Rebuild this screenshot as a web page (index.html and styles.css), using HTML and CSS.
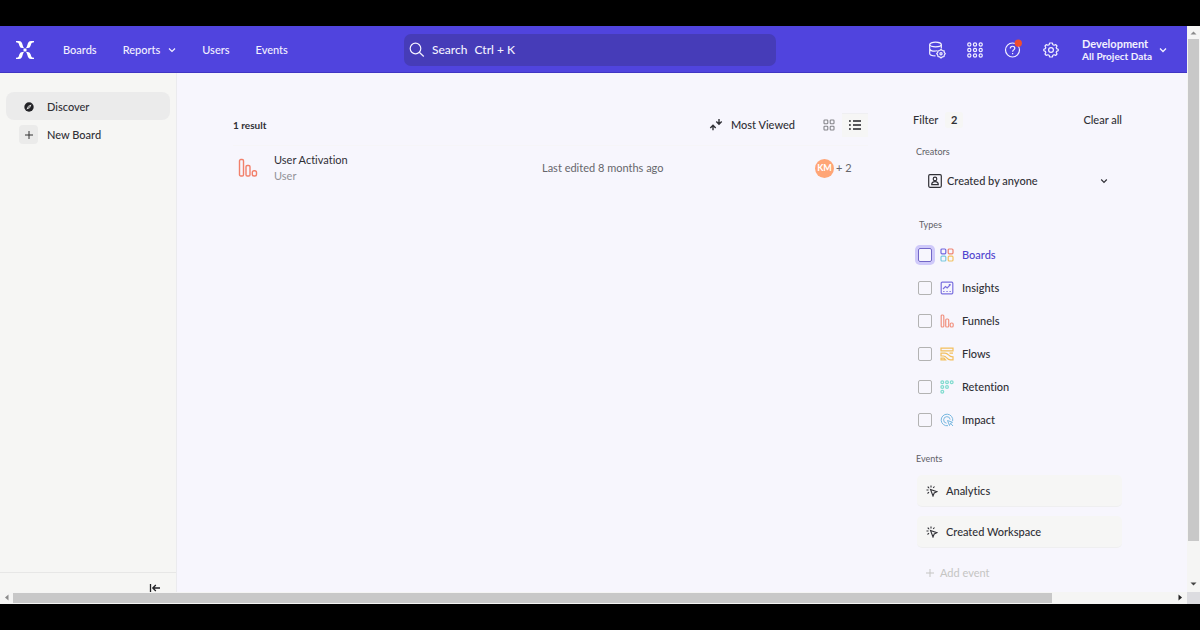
FILE: index.html
```html
<!DOCTYPE html>
<html lang="en">
<head>
<meta charset="utf-8">
<title>Boards</title>
<link rel="stylesheet" href="styles.css">
</head>
<body>
<div class="window">
  <div class="app">
    <header class="topbar">
      <div class="top-left">
        <a class="logo" href="#" aria-label="Home">
          <svg width="20" height="20" viewBox="-1 -1 20 20" fill="#fff"><path d="M0 0H3Q5.300 0 6 2L6.800 4.500Q7.300 6.300 8 7H6Q4 7 3.300 4.500L2.700 2.600Q2.300 1.500 0 1.300ZM18 0H15Q12.700 0 12 2L11.200 4.500Q10.700 6.300 10 7H12Q14 7 14.700 4.500L15.300 2.600Q15.700 1.500 18 1.300ZM0 18H3Q5.300 18 6 16L6.800 13.500Q7.300 11.700 8 11H6Q4 11 3.300 13.500L2.700 15.400Q2.300 16.500 0 16.700ZM18 18H15Q12.700 18 12 16L11.200 13.500Q10.700 11.700 10 11H12Q14 11 14.700 13.500L15.300 15.400Q15.700 16.500 18 16.700Z"/><rect x="7.500" y="7.500" width="3" height="3"/></svg>
        </a>
        <nav class="nav">
          <a href="#">Boards</a>
          <a href="#">Reports <svg width="8" height="8" viewBox="0 0 8 8" fill="none" stroke="currentColor" stroke-width="1.200"><path d="M1 2.500L4 5.500L7 2.500"/></svg></a>
          <a href="#">Users</a>
          <a href="#">Events</a>
        </nav>
      </div>
      <button class="search" type="button">
        <svg width="16" height="16" viewBox="0 0 16 16" fill="none" stroke="currentColor" stroke-width="1.200"><circle cx="6.500" cy="6.500" r="5.300"/><path d="M10.300 10.300L14.800 14.500"/></svg>
        <span>Search</span><span>Ctrl + K</span>
      </button>
      <div class="top-right">
        <div class="tools">
          <button type="button" aria-label="Data management">
            <svg width="18" height="18" viewBox="0 0 18 18" fill="none" stroke="currentColor" stroke-width="1.200"><ellipse cx="7.500" cy="3.500" rx="5.800" ry="2.300"/><path d="M1.700 3.500V12.500C1.700 13.800 4 14.900 7.500 14.900M13.300 3.500V7.500M1.700 8C2.300 10.500 7 10.400 9 9.800"/><path d="M13 8.500L14.300 9.500L16 9.800L16.300 11.400L17.300 12.700L16.300 14L16 15.600L14.300 15.900L13 16.900L11.700 15.900L10 15.600L9.700 14L8.700 12.700L9.700 11.400L10 9.800L11.700 9.500Z"/><circle cx="13" cy="12.700" r="1.100"/></svg>
          </button>
          <button type="button" aria-label="Applications">
            <svg width="18" height="18" viewBox="0 0 18 18" fill="none" stroke="currentColor" stroke-width="1.200"><circle cx="3.300" cy="3.500" r="1.600"/><circle cx="9" cy="3.500" r="1.600"/><circle cx="14.700" cy="3.500" r="1.600"/><circle cx="3.300" cy="9" r="1.600"/><circle cx="9" cy="9" r="1.600"/><circle cx="14.700" cy="9" r="1.600"/><circle cx="3.300" cy="14.500" r="1.600"/><circle cx="9" cy="14.500" r="1.600"/><circle cx="14.700" cy="14.500" r="1.600"/></svg>
          </button>
          <button type="button" aria-label="Help">
            <svg class="help" width="18" height="18" viewBox="0 0 18 18" fill="none" stroke="currentColor" stroke-width="1.200"><circle cx="8.500" cy="9" r="7"/><path d="M6.300 7.400C6.300 4.500 10.800 4.600 10.800 7.200C10.800 8.900 8.600 8.900 8.600 10.700M8.600 11.900V13.200"/><circle cx="14.300" cy="2.200" r="3.600" fill="#f04e2e" stroke="none"/></svg>
          </button>
          <button type="button" aria-label="Settings">
            <svg width="18" height="18" viewBox="0 0 18 18" fill="none" stroke="currentColor" stroke-width="1.200" stroke-linejoin="round"><path d="M7.700 2H10.300L10.900 3.800L12 4.200L13.800 3.600L15 5L14.200 6.800L14.600 7.600L16.200 8.200V9.800L14.600 10.400L14.200 11.200L15 13L13.800 14.400L12 13.800L10.900 14.200L10.300 16H7.700L7.100 14.200L6 13.800L4.200 14.400L3 13L3.800 11.200L3.400 10.400L1.800 9.800V8.200L3.400 7.600L3.800 6.800L3 5L4.200 3.600L6 4.200L7.100 3.800Z"/><circle cx="9" cy="9" r="2.400"/></svg>
          </button>
        </div>
        <button class="project" type="button">
          <span class="project-text"><span class="project-name">Development</span><span>All Project Data</span></span>
          <svg width="8" height="8" viewBox="0 0 8 8" fill="none" stroke="currentColor" stroke-width="1.300"><path d="M1 2.500L4 5.500L7 2.500"/></svg>
        </button>
      </div>
    </header>

    <div class="body">
      <aside class="sidebar">
        <nav class="side-nav">
          <a class="side-item active" href="#">
            <span class="side-icon"><svg width="10" height="10" viewBox="0 0 10 10"><circle cx="5" cy="5" r="4.700" fill="#222226"/><path d="M7.500 2.500L5.900 5.900L2.500 7.500L4.100 4.100Z" fill="#ebebeb"/><circle cx="5" cy="5" r="0.700" fill="#222226"/></svg></span>
            Discover
          </a>
          <a class="side-item" href="#">
            <span class="side-icon boxed"><svg width="8" height="8" viewBox="0 0 8 8" stroke="#333" stroke-width="1"><path d="M4 0V8M0 4H8"/></svg></span>
            New Board
          </a>
        </nav>
        <div class="side-foot">
          <button type="button" aria-label="Collapse sidebar"><svg width="12" height="10" viewBox="0 0 12 10" fill="none" stroke="#222226" stroke-width="1.300"><path d="M1.500 1V9M11 5H4M6.800 2L3.800 5L6.800 8"/></svg></button>
        </div>
      </aside>

      <main class="content">
        <section class="results">
          <div class="toolbar">
            <h1 class="count">1 result</h1>
            <button class="sort" type="button">
              <svg width="14" height="14" viewBox="0 0 14 14" fill="none" stroke="currentColor" stroke-width="1.400"><path d="M4 12.300V7.800M1.300 10L4 7.300L6.700 10M10 1V5.800M7.300 3.500L10 6.200L12.700 3.500"/></svg>
              Most Viewed
            </button>
            <div class="views">
              <button type="button" aria-label="Grid view"><svg width="12" height="12" viewBox="0 0 12 12" fill="none" stroke="#85858a" stroke-width="1.100"><rect x="1" y="1" width="3.800" height="3.800" rx="0.800"/><rect x="7.200" y="1" width="3.800" height="3.800" rx="0.800"/><rect x="1" y="7.200" width="3.800" height="3.800" rx="0.800"/><rect x="7.200" y="7.200" width="3.800" height="3.800" rx="0.800"/></svg></button>
              <button class="selected" type="button" aria-label="List view"><svg width="12" height="12" viewBox="0 0 12 12" fill="none" stroke="#222226" stroke-width="1.300"><path d="M0 2H1.800M4 2H12M0 6H1.800M4 6H12M0 10H1.800M4 10H12"/></svg></button>
            </div>
          </div>
          <a class="result" href="#">
            <svg width="20" height="20" viewBox="0 0 20 20" fill="none" stroke="#f2806b" stroke-width="1.400"><rect x="1.500" y="1.500" width="4" height="16.500" rx="1.300"/><rect x="8" y="7.500" width="4" height="10.500" rx="1.300"/><rect x="14.300" y="12.800" width="4.200" height="5.200" rx="1.800"/></svg>
            <span class="result-name"><span>User Activation</span><span class="result-owner">User</span></span>
            <span class="edited">Last edited 8 months ago</span>
            <span class="people"><span class="avatar">KM</span>+ 2</span>
          </a>
        </section>

        <aside class="filters">
          <div class="filter-head">
            <h2>Filter</h2><span class="badge">2</span>
            <button type="button">Clear all</button>
          </div>
          <h3 class="label creators-label">Creators</h3>
          <button class="creator" type="button">
            <svg width="14" height="14" viewBox="0 0 14 14" fill="none" stroke="currentColor" stroke-width="1.200"><rect x="0.700" y="0.700" width="12.600" height="12.600" rx="1.200"/><circle cx="7" cy="4.900" r="1.800"/><path d="M3.700 10.700C3.700 6.500 10.300 6.500 10.300 10.700Z"/></svg>
            <span>Created by anyone</span>
            <svg width="8" height="8" viewBox="0 0 8 8" fill="none" stroke="currentColor" stroke-width="1.200"><path d="M1.200 2.500L4 5.300L6.800 2.500"/></svg>
          </button>
          <fieldset class="types">
            <legend class="label">Types</legend>
            <label class="type focused"><input type="checkbox"><svg width="14" height="14" viewBox="0 0 14 14" fill="none" stroke-width="1.200"><rect x="1" y="1" width="4.800" height="4.800" rx="1" stroke="#7367df"/><rect x="8.200" y="1" width="4.800" height="4.800" rx="1" stroke="#ef8270"/><rect x="1" y="8.200" width="4.800" height="4.800" rx="1" stroke="#7cc9df"/><rect x="8.200" y="8.200" width="4.800" height="4.800" rx="1" stroke="#f2c262"/></svg>Boards</label>
            <label class="type"><input type="checkbox"><svg width="14" height="14" viewBox="0 0 14 14" fill="none" stroke="#7c71df" stroke-width="1.200"><rect x="1.200" y="1.200" width="11.600" height="11.600" rx="1"/><path d="M3 8L5.500 5.500L7.200 7L10.500 3.500M8.800 3.500H10.700M3.200 10.500H4.500M6.400 10.500H7.700M9.500 10.500H10.800"/></svg>Insights</label>
            <label class="type"><input type="checkbox"><svg width="14" height="14" viewBox="0 0 14 14" fill="none" stroke="#f19280" stroke-width="1.200"><rect x="1.200" y="1" width="2.600" height="12" rx="1"/><rect x="5.700" y="5" width="3" height="8" rx="1"/><rect x="10.200" y="9" width="3" height="4" rx="1.300"/></svg>Funnels</label>
            <label class="type"><input type="checkbox"><svg width="14" height="14" viewBox="0 0 14 14" fill="none" stroke="#f3bf5c" stroke-width="1.200"><path d="M1 1.200H13V3.900H1ZM13 6.200H9.500M1 6.200H5C9 6.200 8 9.900 13 9.900V12.900H10.500C6.500 12.900 7 9 3.500 9H1ZM1 12.900H5.500L4 11.200H1Z"/></svg>Flows</label>
            <label class="type"><input type="checkbox"><svg width="14" height="14" viewBox="0 0 14 14" fill="none" stroke="#80dccf" stroke-width="1.200"><circle cx="2.300" cy="2.300" r="1.400"/><circle cx="7" cy="2.300" r="1.400"/><circle cx="11.700" cy="2.300" r="1.400"/><circle cx="2.300" cy="7" r="1.400"/><circle cx="7" cy="7" r="1.400"/><circle cx="2.300" cy="11.700" r="1.400"/></svg>Retention</label>
            <label class="type"><input type="checkbox"><svg width="14" height="14" viewBox="0 0 14 14" fill="none" stroke="#78b8e0" stroke-width="1"><path d="M8 12.700A5.800 5.800 0 1 1 12.700 8M6.500 10.200A3.300 3.300 0 1 1 10.200 6.500"/><path d="M7.500 7.500L12.500 9.300L10.500 10.300L9.500 12.500ZM10.500 10.300L13 13"/></svg>Impact</label>
          </fieldset>
          <h3 class="label">Events</h3>
          <div class="events">
            <button class="event" type="button"><svg width="12" height="12" viewBox="0 0 12 12" fill="none" stroke="currentColor" stroke-width="1.100"><path d="M4.500 4.500L11 6.700L8.200 8L7 11ZM5 0.500V2.500M1.700 1.700L3 3M0.500 5H2.500M1.500 8.500L3 7.200M8.500 1.500L7.200 2.900"/></svg>Analytics</button>
            <button class="event" type="button"><svg width="12" height="12" viewBox="0 0 12 12" fill="none" stroke="currentColor" stroke-width="1.100"><path d="M4.500 4.500L11 6.700L8.200 8L7 11ZM5 0.500V2.500M1.700 1.700L3 3M0.500 5H2.500M1.500 8.500L3 7.200M8.500 1.500L7.200 2.900"/></svg>Created Workspace</button>
          </div>
          <button class="add" type="button"><svg width="8" height="8" viewBox="0 0 8 8" stroke="currentColor" stroke-width="1"><path d="M4 0V8M0 4H8"/></svg>Add event</button>
        </aside>
      </main>
    </div>
  </div>

  <div class="vbar">
    <svg width="13" height="12" viewBox="0 0 13 12"><path d="M3.500 8.500L6.500 5.500L9.500 8.500Z" fill="#8b8b8b"/></svg>
    <div class="vtrack"><div class="vthumb"></div></div>
    <svg width="13" height="16" viewBox="0 0 13 16"><path d="M3.500 6.500L6.500 9.500L9.500 6.500Z" fill="#444"/></svg>
  </div>
  <div class="hbar">
    <svg width="13" height="12" viewBox="0 0 13 12"><path d="M8.500 2.500L5 5.500L8.500 8.500Z" fill="#8b8b8b"/></svg>
    <div class="htrack"><div class="hthumb"></div></div>
    <svg width="13" height="12" viewBox="0 0 13 12"><path d="M4.500 2.500L8 5.500L4.500 8.500Z" fill="#222"/></svg>
  </div>
  <div class="corner"></div>
</div>
</body>
</html>
```
FILE: styles.css
```css
* { box-sizing: border-box; }
body {
  margin: 0;
  background: #000;
  color: #303036;
  font: 500 11px/16px Lato, "Liberation Sans", sans-serif;
  font-variant-ligatures: none;
}
a { color: inherit; text-decoration: none; }
button { margin: 0; padding: 0; border: 0; background: none; color: inherit; font: inherit; font-variant-ligatures: none; cursor: pointer; }
h1, h2, h3 { margin: 0; font: inherit; }
svg { display: block; flex: none; }

.window {
  display: grid;
  grid-template-columns: minmax(0, 1fr) 13px;
  grid-template-rows: minmax(0, 1fr) 12px;
  height: 100vh;
  padding: 26px 0;
}
.app { display: flex; flex-direction: column; min-height: 0; overflow: hidden; background: #f7f6fd; }

.topbar {
  display: grid;
  grid-template-columns: 1fr 372px 1fr;
  flex: none;
  align-items: center;
  height: 47px;
  padding: 1px 20px 0 13px;
  background: #5044de;
  border-bottom: 1px solid #4035c4;
  color: #f3f1ff;
}
.top-left, .top-right { display: flex; align-items: center; }
.top-left { gap: 28px; padding-left: 2px; }
.top-right { justify-content: flex-end; }
.nav { display: flex; gap: 26px; }
.nav a { display: flex; align-items: center; gap: 8px; }
.search {
  display: flex;
  align-items: center;
  gap: 7px;
  height: 32px;
  padding: 0 5px;
  border-radius: 7px;
  background: #463cb8;
  font-size: 12px;
}
.tools { display: flex; gap: 20px; padding-right: 22px; }
.help { overflow: visible; }
.project { display: flex; align-items: center; gap: 7px; text-align: left; font-size: 10px; line-height: 13px; font-weight: 700; }
.project-text { display: flex; flex-direction: column; }
.project-name { font-size: 11px; }

.body { display: flex; flex: 1; min-height: 0; }
.sidebar { display: flex; flex-direction: column; flex: none; width: 177px; background: #f6f6f4; border-right: 1px solid #ebebee; }
.side-nav { flex: 1; padding: 19px 6px 0; }
.side-item { display: flex; align-items: center; gap: 9px; height: 28px; padding: 1px 0 0 13px; border-radius: 8px; }
.side-item.active { background: #ebebeb; }
.side-icon { display: grid; place-items: center; width: 19px; height: 19px; border-radius: 4px; }
.boxed { background: #ebebea; }
.side-foot { display: flex; justify-content: flex-end; height: 20px; padding: 10px 15px 0 0; border-top: 1px solid #e7e7e6; }
.side-foot button { height: 10px; }

.content { display: grid; grid-template-columns: minmax(0, 1fr) 209px; flex: 1; gap: 45px; padding: 0 65px 0 56px; }
.results { padding-top: 32px; }
.toolbar { display: flex; align-items: center; height: 41px; padding-bottom: 1px; border-bottom: 1px solid #f6f5f8; }
.count { flex: 1; font-size: 10px; font-weight: 700; }
.sort { display: flex; align-items: center; gap: 8px; margin-right: 21px; }
.views { display: flex; }
.views button { display: grid; place-items: center; width: 26px; height: 24px; }
.views .selected { background: #f6f6f5; border-top: 1px solid #efeff2; }
.result { display: grid; grid-template-columns: 36px 268fr 273fr 53fr; align-items: center; padding: 6px 0 6px 5px; font-weight: 400; }
.result-name { display: flex; flex-direction: column; }
.result-owner { color: #929298; }
.edited { color: #66666b; }
.people { display: flex; align-items: center; gap: 2px; color: #66666b; }
.avatar { display: grid; place-items: center; width: 19px; height: 19px; border-radius: 50%; background: #ffa576; color: #fff; font-size: 9px; font-weight: 700; }

.filters { padding-top: 37px; }
.filter-head { display: flex; align-items: center; height: 20px; }
.filter-head button { margin-left: auto; }
.badge { width: 18px; margin-left: 7px; text-align: center; background: #f6f6f5; border-radius: 3px; font-weight: 700; }
.label { padding: 0 3px; color: #606066; font-size: 9px; font-weight: 400; }
.creators-label { margin-top: 14px; }
.creator { display: flex; align-items: center; gap: 5px; width: 100%; height: 26px; margin-top: 8px; padding: 0 14px 0 15px; text-align: left; }
.creator span { flex: 1; }
.types { margin: 23px 0 15px; padding: 0 0 0 5px; border: 0; }
.types legend { padding: 0 1px; margin-bottom: 5px; }
.type { display: flex; align-items: center; gap: 8px; height: 33px; }
.type input { appearance: none; width: 14px; height: 14px; margin: 0; border: 1px solid #b3b3b3; border-radius: 2px; }
.focused { color: #5044ce; }
.focused input { border-color: #7367c8; box-shadow: 0 0 0 3px #cfc9fa; }
.events { display: grid; gap: 9px; margin: 8px 0 17px 4px; }
.event { display: flex; align-items: center; gap: 8px; height: 32px; padding-left: 9px; border-radius: 5px; background: #f6f6f5; border-bottom: 1px solid #efeff0; }
.add { display: flex; align-items: center; gap: 6px; padding-left: 13px; color: #c5c5c3; font-weight: 400; }

.vbar { display: flex; flex-direction: column; background: #f5f5f4; }
.vtrack { flex: 1; padding: 1px; }
.vthumb { height: 93.6%; background: #c8c8c8; }
.hbar { display: flex; background: #f5f5f4; }
.htrack { flex: 1; padding: 1px 0; }
.hthumb { width: 89.5%; height: 10px; background: #c8c8c8; }
.corner { background: #dcdce0; }
```
